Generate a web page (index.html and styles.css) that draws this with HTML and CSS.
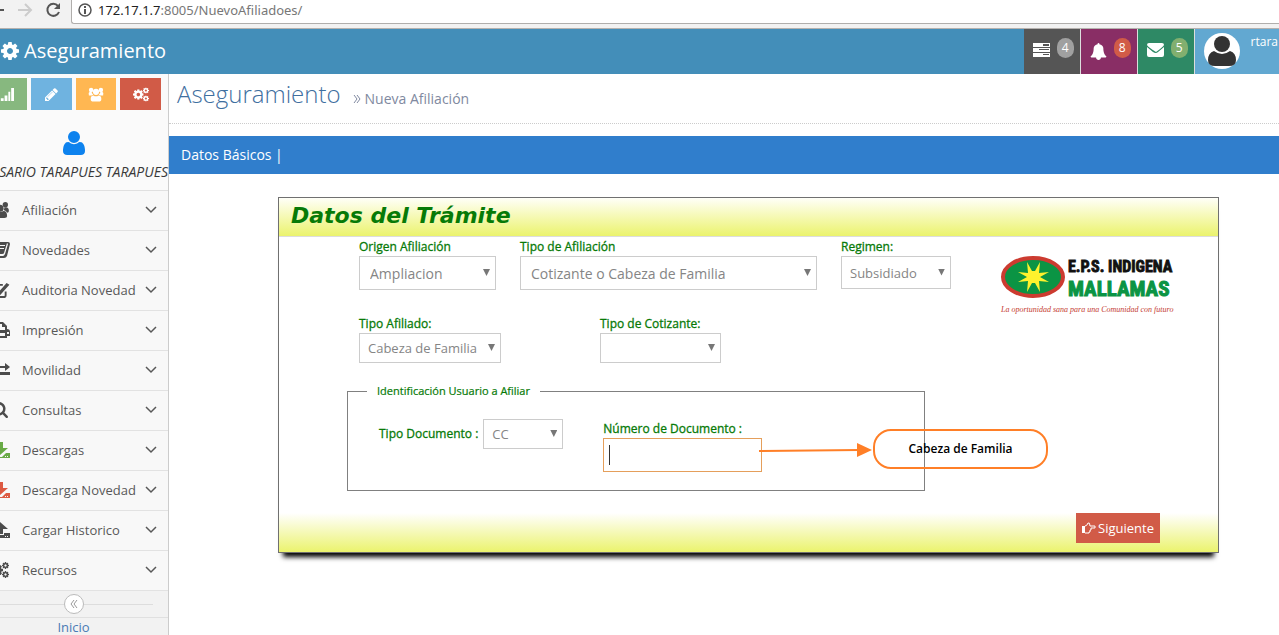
FILE: index.html
```html
<!DOCTYPE html>
<html lang="es">
<head>
<meta charset="utf-8">
<title>Aseguramiento - Nueva Afiliación</title>
<link rel="stylesheet" href="styles.css">
</head>
<body>
<svg class="sprite" aria-hidden="true">
  <symbol id="cog" viewBox="128 128 1536 1536"><path d="M1152 896q0-106-75-181t-181-75-181 75-75 181 75 181 181 75 181-75 75-181zm512-109v222q0 12-8 23t-20 13l-185 28q-19 54-39 91 35 50 107 138 10 12 10 25t-9 23q-27 37-99 108t-94 71q-12 0-26-9l-138-108q-44 23-91 38-16 136-29 186-7 28-36 28h-222q-14 0-24.500-8.500t-11.500-21.500l-28-184q-49-16-90-37l-141 107q-10 9-25 9-14 0-25-11-126-114-165-168-7-10-7-23 0-12 8-23 15-21 51-66.500t54-70.500q-27-50-41-99l-183-27q-13-2-21-12.500t-8-23.500v-222q0-12 8-23t19-13l186-28q14-46 39-92-40-57-107-138-10-12-10-24 0-10 9-23 26-36 98.500-107.500t94.500-71.500q13 0 26 10l138 107q44-23 91-38 16-136 29-186 7-28 36-28h222q14 0 24.500 8.500t11.500 21.500l28 184q49 16 90 37l142-107q9-9 24-9 13 0 25 10 129 119 165 170 7 8 7 22 0 12-8 23-15 21-51 66.500t-54 70.500q26 50 41 98l183 28q13 2 21 12.500t8 23.500z"/></symbol>
  <symbol id="cogs" viewBox="0 0 18 16"><use href="#cog" x="0" y="2" width="12" height="12"/><use href="#cog" x="11" y="0" width="7" height="7"/><use href="#cog" x="11" y="9" width="7" height="7"/></symbol>
  <symbol id="user" viewBox="192 128 1408 1536"><path d="M1600 1405q0 120-73 189.500t-194 69.500h-874q-121 0-194-69.500t-73-189.500q0-53 3.500-103.500t14-109 26.500-108.500 43-97.500 62-81 85.500-53.500 111.500-20q9 0 42 21.500t74.500 48 108 48 133.500 21.500 133.500-21.500 108-48 74.500-48 42-21.500q61 0 111.500 20t85.500 53.500 62 81 43 97.500 26.500 108.500 14 109 3.500 103.500zm-320-893q0 159-112.500 271.500t-271.500 112.500-271.500-112.500-112.500-271.500 112.500-271.500 271.500-112.500 271.500 112.500 112.500 271.500z"/></symbol>
  <symbol id="bell" viewBox="64 0 1664 1792"><path d="M1728 1408q0 52-38 90t-90 38h-448q0 106-75 181t-181 75-181-75-75-181h-448q-52 0-90-38t-38-90q50-42 91-88t85-119.500 74.500-158.500 50-206 19.500-260q0-152 117-282.500t307-158.500q-8-19-8-39 0-40 28-68t68-28 68 28 28 68q0 20-8 39 190 28 307 158.500t117 282.500q0 139 19.500 260t50 206 74.500 158.500 85 119.500 91 88z"/></symbol>
  <symbol id="pencil" viewBox="128 128 1536 1536"><path d="M491 1536l91-91-235-235-91 91v107h128v128h107zm523-928q0-22-22-22-10 0-17 7l-542 542q-7 7-7 17 0 22 22 22 10 0 17-7l542-542q7-7 7-17zm-54-192l416 416-832 832h-416v-416zm683 96q0 53-37 90l-166 166-416-416 166-165q36-38 90-38 53 0 91 38l235 234q37 39 37 91z"/></symbol>
  <symbol id="search" viewBox="64 128 1664 1664"><path d="M1216 832q0-185-131.500-316.500t-316.500-131.500-316.500 131.500-131.500 316.500 131.500 316.500 316.500 131.500 316.500-131.500 131.500-316.500zm512 832q0 52-38 90t-90 38q-54 0-90-38l-343-342q-179 124-399 124-143 0-273.500-55.500t-225-150-150-225-55.500-273.500 55.500-273.500 150-225 225-150 273.500-55.500 273.500 55.500 225 150 150 225 55.500 273.500q0 220-124 399l343 343q37 37 37 90z"/></symbol>
  <symbol id="avatar" viewBox="0 0 28 30"><circle cx="14" cy="8" r="8"/><path d="M6 15q8 6 16 0 6 2 6 9 0 6-7 6H7q-7 0-7-6 0-7 6-9z"/></symbol>
  <symbol id="group" viewBox="0 0 18 16"><circle cx="3.500" cy="3" r="2.500"/><circle cx="14.500" cy="3" r="2.500"/><path d="M1 9q-1-3 1-4h2q0 2 2 3l-2 1zM17 9q1-3-1-4h-2q0 2-2 3l2 1z"/><circle cx="9" cy="5" r="3.500"/><path d="M3 13q0-4 3-4 3 2 6 0 3 0 3 4 0 3-3 3H6q-3 0-3-3z"/></symbol>
  <symbol id="signal" viewBox="0 0 17 14"><path d="M0 12h2v2H0zM3 11h3v3H3zM7 8h3v6H7zM11 4h2v10h-2zM14 0h3v14h-3z"/></symbol>
  <symbol id="book" viewBox="0 0 20 16"><path fill-rule="evenodd" d="M6 0h12q2 0 2 2l-3 12q-1 2-3 2H3q-3 0-3-3l3-11q1-2 3-2zm1 3v1h8V3zm-1 3v1h8V6zM3 12q-1 2 1 2h9q1 0 2-2l3-10-1-1-3 10q0 1-2 1z"/></symbol>
  <symbol id="check" viewBox="0 0 20 17"><path d="M16 10v4q0 2-2 2H4q-2 0-2-2V5q0-2 2-2h9" fill="none" stroke="currentColor" stroke-width="2"/><path d="M5 8l2-2 3 3 7-8 3 2-10 11z"/></symbol>
  <symbol id="print" viewBox="0 0 20 16"><path fill-rule="evenodd" d="M4 0h9l4 4v3q3 0 3 3v4h-3v2H3v-2H0v-4q0-3 3-3V1zm1 2v6h10V5h-3V2zm0 9v3h10v-3zm12-1v2h2v-2z"/></symbol>
  <symbol id="swap" viewBox="0 0 20 14"><path d="M0 3h15V0l5 4-5 4V5H0zM5 6v3h15v3H5v2l-5-4z"/></symbol>
  <symbol id="download" viewBox="0 0 20 16"><path fill-rule="evenodd" d="M7 0h6v6h5l-8 7-8-7h5zM0 11h4l4 4h4l4-4h4v5H0zm15 3v1h1v-1zm2 0v1h1v-1z"/></symbol>
  <symbol id="upload" viewBox="0 0 20 16"><path fill-rule="evenodd" d="M10 0l8 7h-5v5H7V7H2zM0 11h6v2h8v-2h6v5H0zm15 3v1h1v-1zm2 0v1h1v-1z"/></symbol>
  <symbol id="people" viewBox="0 0 20 18"><circle cx="10" cy="7" r="4"/><path d="M2 16q0-6 4-6 4 2 8 0 4 0 4 6 0 2-3 2H5q-3 0-3-2z"/><circle cx="16" cy="3" r="3"/><path d="M14 9q1-1 1-3 5-1 5 4 0 2-2 2-1-2-4-3z"/></symbol>
  <symbol id="tasks" viewBox="0 0 17 14"><path fill-rule="evenodd" d="M0 0h17v4H0zm10 1v2h6V1zM0 5h17v4H0zm6 1v1h10V6zM0 10h17v4H0zm10 1v1h6v-1z"/></symbol>
  <symbol id="envelope" viewBox="0 0 17 14"><path d="M2 0h13q2 0 2 2-1 2-8 7Q1 4 0 2q0-2 2-2z"/><path d="M0 4l6 5q3 2 5 0l6-5v8q0 2-2 2H2q-2 0-2-2z"/></symbol>
  <symbol id="chevron" viewBox="0 0 12 8"><path d="M1 1l5 5 5-5" fill="none" stroke="currentColor" stroke-width="1.500"/></symbol>
  <symbol id="hand" viewBox="0 0 14 12"><path d="M0 4h3v7H0z"/><path d="M3 4q2 0 3-3 2-1 2 3h5v2H9v2H8v2H7v1H3" fill="none" stroke="currentColor"/></symbol>
</svg>

<header class="browser">
  <svg class="browser-nav" viewBox="0 0 71 24" aria-hidden="true">
    <path d="M0 10h4" stroke="#555" stroke-width="2"/>
    <path d="M18 10h13M25 4l6 6-6 6" fill="none" stroke="#ccc" stroke-width="2"/>
    <path d="M58 6a6 6 0 1 0 1 6" fill="none" stroke="#555" stroke-width="2"/><path d="M60 3v6h-6z" fill="#555"/>
  </svg>
  <div class="address">
    <svg class="info" viewBox="0 0 14 14" aria-hidden="true"><circle cx="7" cy="7" r="6" fill="none" stroke="#555" stroke-width="1.500"/><path d="M6 3h2v2H6zM6 6h2v5H6z" fill="#555"/></svg>
    <span><b>172.17.1.7</b>:8005/NuevoAfiliadoes/</span>
  </div>
</header>

<nav class="navbar">
  <a class="brand" href="#"><svg><use href="#cog"/></svg>Aseguramiento</a>
  <div class="nav-items">
    <a class="nav-item grey" href="#"><svg><use href="#tasks"/></svg><span class="badge">4</span></a>
    <a class="nav-item purple" href="#"><svg class="bell"><use href="#bell"/></svg><span class="badge">8</span></a>
    <a class="nav-item green" href="#"><svg><use href="#envelope"/></svg><span class="badge">5</span></a>
    <a class="nav-user" href="#"><span class="avatar"><svg><use href="#avatar"/></svg></span>rtara</a>
  </div>
</nav>

<div class="layout">
  <aside class="sidebar">
    <div class="shortcuts">
      <button class="success" aria-label="Estadísticas"><svg><use href="#signal"/></svg></button>
      <button class="info-btn" aria-label="Editar"><svg class="small"><use href="#pencil"/></svg></button>
      <button class="warning" aria-label="Usuarios"><svg><use href="#group"/></svg></button>
      <button class="danger" aria-label="Configuración"><svg><use href="#cogs"/></svg></button>
    </div>
    <div class="profile"><svg><use href="#user"/></svg><em>SARIO TARAPUES TARAPUES</em></div>
    <ul class="menu">
      <li><a href="#"><svg class="icon"><use href="#people"/></svg><span>Afiliación</span><svg class="chev"><use href="#chevron"/></svg></a></li>
      <li><a href="#"><svg class="icon"><use href="#book"/></svg><span>Novedades</span><svg class="chev"><use href="#chevron"/></svg></a></li>
      <li><a href="#"><svg class="icon"><use href="#check"/></svg><span>Auditoria Novedad</span><svg class="chev"><use href="#chevron"/></svg></a></li>
      <li><a href="#"><svg class="icon"><use href="#print"/></svg><span>Impresión</span><svg class="chev"><use href="#chevron"/></svg></a></li>
      <li><a href="#"><svg class="icon"><use href="#swap"/></svg><span>Movilidad</span><svg class="chev"><use href="#chevron"/></svg></a></li>
      <li><a href="#"><svg class="icon"><use href="#search"/></svg><span>Consultas</span><svg class="chev"><use href="#chevron"/></svg></a></li>
      <li><a href="#"><svg class="icon icon-green"><use href="#download"/></svg><span>Descargas</span><svg class="chev"><use href="#chevron"/></svg></a></li>
      <li><a href="#"><svg class="icon icon-red"><use href="#download"/></svg><span>Descarga Novedad</span><svg class="chev"><use href="#chevron"/></svg></a></li>
      <li><a href="#"><svg class="icon"><use href="#upload"/></svg><span>Cargar Historico</span><svg class="chev"><use href="#chevron"/></svg></a></li>
      <li><a href="#"><svg class="icon"><use href="#cogs"/></svg><span>Recursos</span><svg class="chev"><use href="#chevron"/></svg></a></li>
    </ul>
    <div class="collapse"><button aria-label="Contraer menú"><svg viewBox="0 0 8 8"><path d="M4 0L1 4l3 4M7 0L4 4l3 4" fill="none" stroke="#999"/></svg></button></div>
    <a class="home" href="#">Inicio</a>
  </aside>

  <main class="content">
    <div class="page-header">
      <h1>Aseguramiento</h1>
      <small><svg viewBox="0 0 8 8" aria-hidden="true"><path d="M1 0l3 4-3 4M4 0l3 4-3 4" fill="none" stroke="currentColor"/></svg>Nueva Afiliación</small>
    </div>
    <div class="section-bar">Datos Básicos |</div>

    <form class="panel">
      <h2>Datos del Trámite</h2>
      <div class="panel-body">
        <div class="fields">
          <div class="row row-top">
            <div class="field origin"><label for="origen">Origen Afiliación</label><span class="select large"><select id="origen"><option>Ampliacion</option></select></span></div>
            <div class="field kind"><label for="tipo">Tipo de Afiliación</label><span class="select large"><select id="tipo"><option>Cotizante o Cabeza de Familia</option></select></span></div>
            <div class="field regime"><label for="regimen">Regimen:</label><span class="select medium"><select id="regimen"><option>Subsidiado</option></select></span></div>
          </div>
          <div class="row row-second">
            <div class="field member"><label for="afiliado">Tipo Afiliado:</label><span class="select"><select id="afiliado"><option>Cabeza de Familia</option></select></span></div>
            <div class="field payer"><label for="cotizante">Tipo de Cotizante:</label><span class="select"><select id="cotizante"><option></option></select></span></div>
          </div>
          <fieldset>
            <legend>Identificación Usuario a Afiliar</legend>
            <div class="identity">
              <div class="doc-type"><label for="doc">Tipo Documento :</label><span class="select"><select id="doc"><option>CC</option></select></span></div>
              <div class="field doc-number"><label for="numero">Número de Documento :</label><span class="entry"><input id="numero" type="text"></span></div>
            </div>
            <div class="callout">
              <svg viewBox="0 0 114 18" aria-hidden="true"><path d="M0 11l100-1" stroke="#ff7f27" stroke-width="2"/><path d="M98 3l15 7-15 7z" fill="#ff7f27"/></svg>
              <strong>Cabeza de Familia</strong>
            </div>
          </fieldset>
        </div>
        <svg class="logo" viewBox="0 0 172 62" role="img" aria-label="E.P.S. Indigena Mallamas">
          <ellipse cx="33" cy="22" rx="30" ry="19" fill="#0b9444" stroke="#cc3b30" stroke-width="4"/>
          <path d="M27 7l5 9h3l5-9-1 11 10-1-9 5 9 5-10-1 1 11-5-9h-3l-5 9 1-11-10 1 9-5-9-5 10 1z" fill="#fff22d"/>
          <text class="logo-top" x="68" y="17">E.P.S. INDIGENA</text>
          <text class="logo-name" x="68" y="41">MALLAMAS</text>
          <text class="logo-motto" x="1" y="57">La oportunidad sana para una Comunidad con futuro</text>
        </svg>
      </div>
      <div class="panel-footer"><button type="button"><svg><use href="#hand"/></svg>Siguiente</button></div>
    </form>
  </main>
</div>
</body>
</html>
```

FILE: styles.css
```css
* { box-sizing: border-box; }
body {
  margin: 0;
  min-height: 100vh;
  display: flex;
  flex-direction: column;
  overflow-x: hidden;
  background: #fff;
  color: #393939;
  font: 13px/20px "Open Sans", sans-serif;
}
a { color: inherit; text-decoration: none; }
svg { fill: currentColor; flex: none; }
button { border: 0; padding: 0; font: inherit; color: #fff; }
.sprite { position: absolute; width: 0; height: 0; }

.browser { display: flex; height: 29px; background: #f2f2f2; border-bottom: 1px solid #b5b1ae; }
.browser-nav { width: 71px; height: 24px; }
.address {
  flex: 1;
  height: 24px;
  display: flex;
  align-items: center;
  gap: 6px;
  padding: 0 6px 4px;
  background: #fff;
  border: solid #b0aeac;
  border-width: 0 0 1px 1px;
  border-bottom-left-radius: 3px;
  color: #777;
  font: 13px/18px "Noto Sans", sans-serif;
}
.address b { font-weight: 400; color: #222; }
.info { width: 14px; height: 14px; }

.navbar { display: flex; justify-content: space-between; height: 45px; background: #438eb9; color: #fff; }
.brand { display: flex; align-items: center; gap: 5px; padding: 0 0 2px 1px; font-size: 20px; }
.brand svg { width: 18px; height: 18px; }
.nav-items { display: flex; gap: 1px; background: #ddd; }
.nav-item { display: flex; width: 56px; padding: 9px 6px 0 9px; justify-content: space-between; }
.nav-item svg { width: 17px; height: 14px; margin-top: 5px; }
.nav-item .bell { width: 17px; height: 17px; }
.badge { width: 17px; height: 20px; border-radius: 10px; text-align: center; font-size: 12px; }
.grey { background: #555; }
.grey .badge { background: #a0a0a0; }
.purple { background: #892e65; }
.purple .badge { background: #d15b47; }
.green { background: #2e8965; }
.green .badge { background: #82af6f; }
.nav-user { display: flex; gap: 11px; padding: 4px 1px 0 9px; background: #62a8d1; font-size: 12px; line-height: 18px; }
.avatar { flex: none; display: flex; width: 36px; height: 36px; border-radius: 50%; background: #fff; color: #333; align-items: center; justify-content: center; }
.avatar svg { width: 28px; height: 30px; }

.layout { flex: 1; display: flex; }
.sidebar { flex: none; width: 190px; margin-left: -21px; background: #f2f2f2; border-right: 1px solid #ccc; }
.shortcuts { display: flex; gap: 4px; padding: 4px 7px; background: #fafafa; }
.shortcuts button { flex: 1; height: 32px; display: grid; place-items: center; }
.shortcuts svg { width: 16px; height: 15px; }
.shortcuts .small { width: 13px; height: 13px; }
.success { background: #87b87f; }
.info-btn { background: #6fb3e0; }
.warning { background: #ffb752; }
.danger { background: #d15b47; }
.profile { display: flex; flex-direction: column; align-items: flex-end; gap: 7px; padding: 17px 0 8px; background: #fafafa; font-size: 14px; white-space: nowrap; }
.profile svg { width: 22px; height: 24px; align-self: center; color: #0d82ee; }
.menu { list-style: none; margin: 0; padding: 0; border-top: 1px solid #e0e0e0; }
.menu li { height: 40px; border-bottom: 1px solid #e2e2e2; background: #f8f8f8; color: #585858; }
.menu a { display: flex; align-items: center; height: 38px; padding: 0 11px; }
.menu span { flex: 1; white-space: nowrap; }
.icon { width: 20px; height: 16px; margin-right: 12px; color: #4c4c4c; }
.icon-green { color: #69aa46; }
.icon-red { color: #dd5a43; }
.chev { width: 12px; height: 8px; }
.collapse {
  height: 27px;
  display: grid;
  place-items: center;
  border-bottom: 1px solid #e0e0e0;
  background: linear-gradient(#ddd, #ddd) 0 13px / 174px 1px no-repeat;
}
.collapse button { width: 20px; height: 20px; display: grid; place-items: center; border: 1px solid #bbb; border-radius: 50%; background: #fff; }
.collapse svg { width: 8px; height: 8px; }
.home { display: block; height: 17px; text-align: center; color: #4a7ab5; line-height: 18px; }

.content { flex: 1; min-width: 0; }
.page-header { display: flex; align-items: baseline; gap: 12px; height: 50px; padding: 3px 8px 0; border-bottom: 1px dotted #ccc; }
h1 { margin: 0; font-size: 24px; line-height: 34px; font-weight: 300; color: #3f6f9f; }
small { display: flex; align-items: center; gap: 4px; color: #8089a0; font-size: 14px; }
small svg { width: 8px; height: 8px; }
.section-bar { margin-top: 12px; padding: 0 12px; background: #307ecc; color: #fff; font-size: 14px; line-height: 38px; }

.panel { margin: 23px 60px 0 109px; border: 1px solid #707070; box-shadow: 0 9px 5px -5px #000; }
h2 {
  margin: 0;
  padding: 0 0 2px 12px;
  border-bottom: 1px solid #ddd;
  background: linear-gradient(#fffff8, #ebf36d);
  color: #077a07;
  font: italic bold 22px/36px "DejaVu Sans", sans-serif;
}
h2, .section-bar { white-space: nowrap; }
.panel-body { display: flex; justify-content: space-between; padding-right: 46px; color: #077a07; font-size: 12px; }
.fields { width: 604px; margin-left: 80px; }
.row { display: flex; }
.row-top { gap: 24px; height: 77px; }
.row-second { gap: 99px; height: 59px; }
.field { display: grid; align-content: start; }
.field label { line-height: 19px; white-space: nowrap; }
label { font-weight: 400; -webkit-text-stroke: 0.3px currentColor; }
.origin { width: 137px; }
.kind { width: 297px; }
.regime { width: 110px; }
.member { width: 142px; }
.payer { width: 121px; }
.select { position: relative; display: grid; height: 30px; }
.select.medium { height: 33px; }
.select.large { height: 34px; }
.select::after {
  content: "";
  position: absolute;
  top: calc(50% - 4px);
  right: 6px;
  width: 7px;
  height: 7px;
  background: #777;
  clip-path: polygon(0 0, 100% 0, 50% 100%);
  pointer-events: none;
}
select { appearance: none; width: 100%; padding: 0 8px; border: 1px solid #ccc; border-radius: 0; background: #fff; color: #858585; font: 13px "Open Sans", sans-serif; }
.large select { padding: 0 10px; font-size: 14px; }
fieldset { position: relative; width: 578px; margin: 8px 0 22px -12px; padding: 0 0 0 19px; border: 1px solid #808080; }
legend { padding: 0 10px; font-size: 11px; line-height: 20px; -webkit-text-stroke: 0.2px currentColor; }
.identity { display: flex; gap: 40px; height: 89px; padding: 18px 0 0 12px; }
.doc-type { display: flex; align-items: center; gap: 5px; height: 30px; }
.doc-type .select { width: 80px; }
.doc-number { width: 159px; }
.entry { position: relative; display: grid; }
.entry::after { content: ""; position: absolute; left: 6px; top: 7px; width: 1px; height: 20px; background: #333; }
input { width: 100%; height: 34px; padding: 5px 4px; border: 1px solid #e59f5b; font: 14px "Open Sans", sans-serif; }
.callout { position: absolute; left: 411px; top: 28px; display: flex; align-items: center; color: #000; }
.callout svg { width: 114px; height: 18px; }
.callout strong { width: 175px; height: 40px; border: 2px solid #ff7f27; border-radius: 18px; text-align: center; font-weight: 600; line-height: 36px; }
.logo { width: 172px; height: 62px; margin-top: 18px; overflow: visible; }
.logo-top { font: bold 16px "Roboto Condensed", "Liberation Sans", sans-serif; fill: #111; stroke: #111; stroke-width: 0.8px; }
.logo-name { font: bold 21px "Roboto Condensed", "Liberation Sans", sans-serif; fill: #0b9444; stroke: #0b9444; }
.logo-motto { font: italic 8px "Liberation Serif", serif; fill: #c43a30; }
.panel-footer { display: flex; justify-content: flex-end; padding: 0 58px 9px 0; background: linear-gradient(#fff, #ebf36d); }
.panel-footer button { display: flex; align-items: center; justify-content: center; gap: 2px; width: 84px; height: 30px; background: #d15b47; }
.panel-footer svg { width: 14px; height: 12px; }
```
